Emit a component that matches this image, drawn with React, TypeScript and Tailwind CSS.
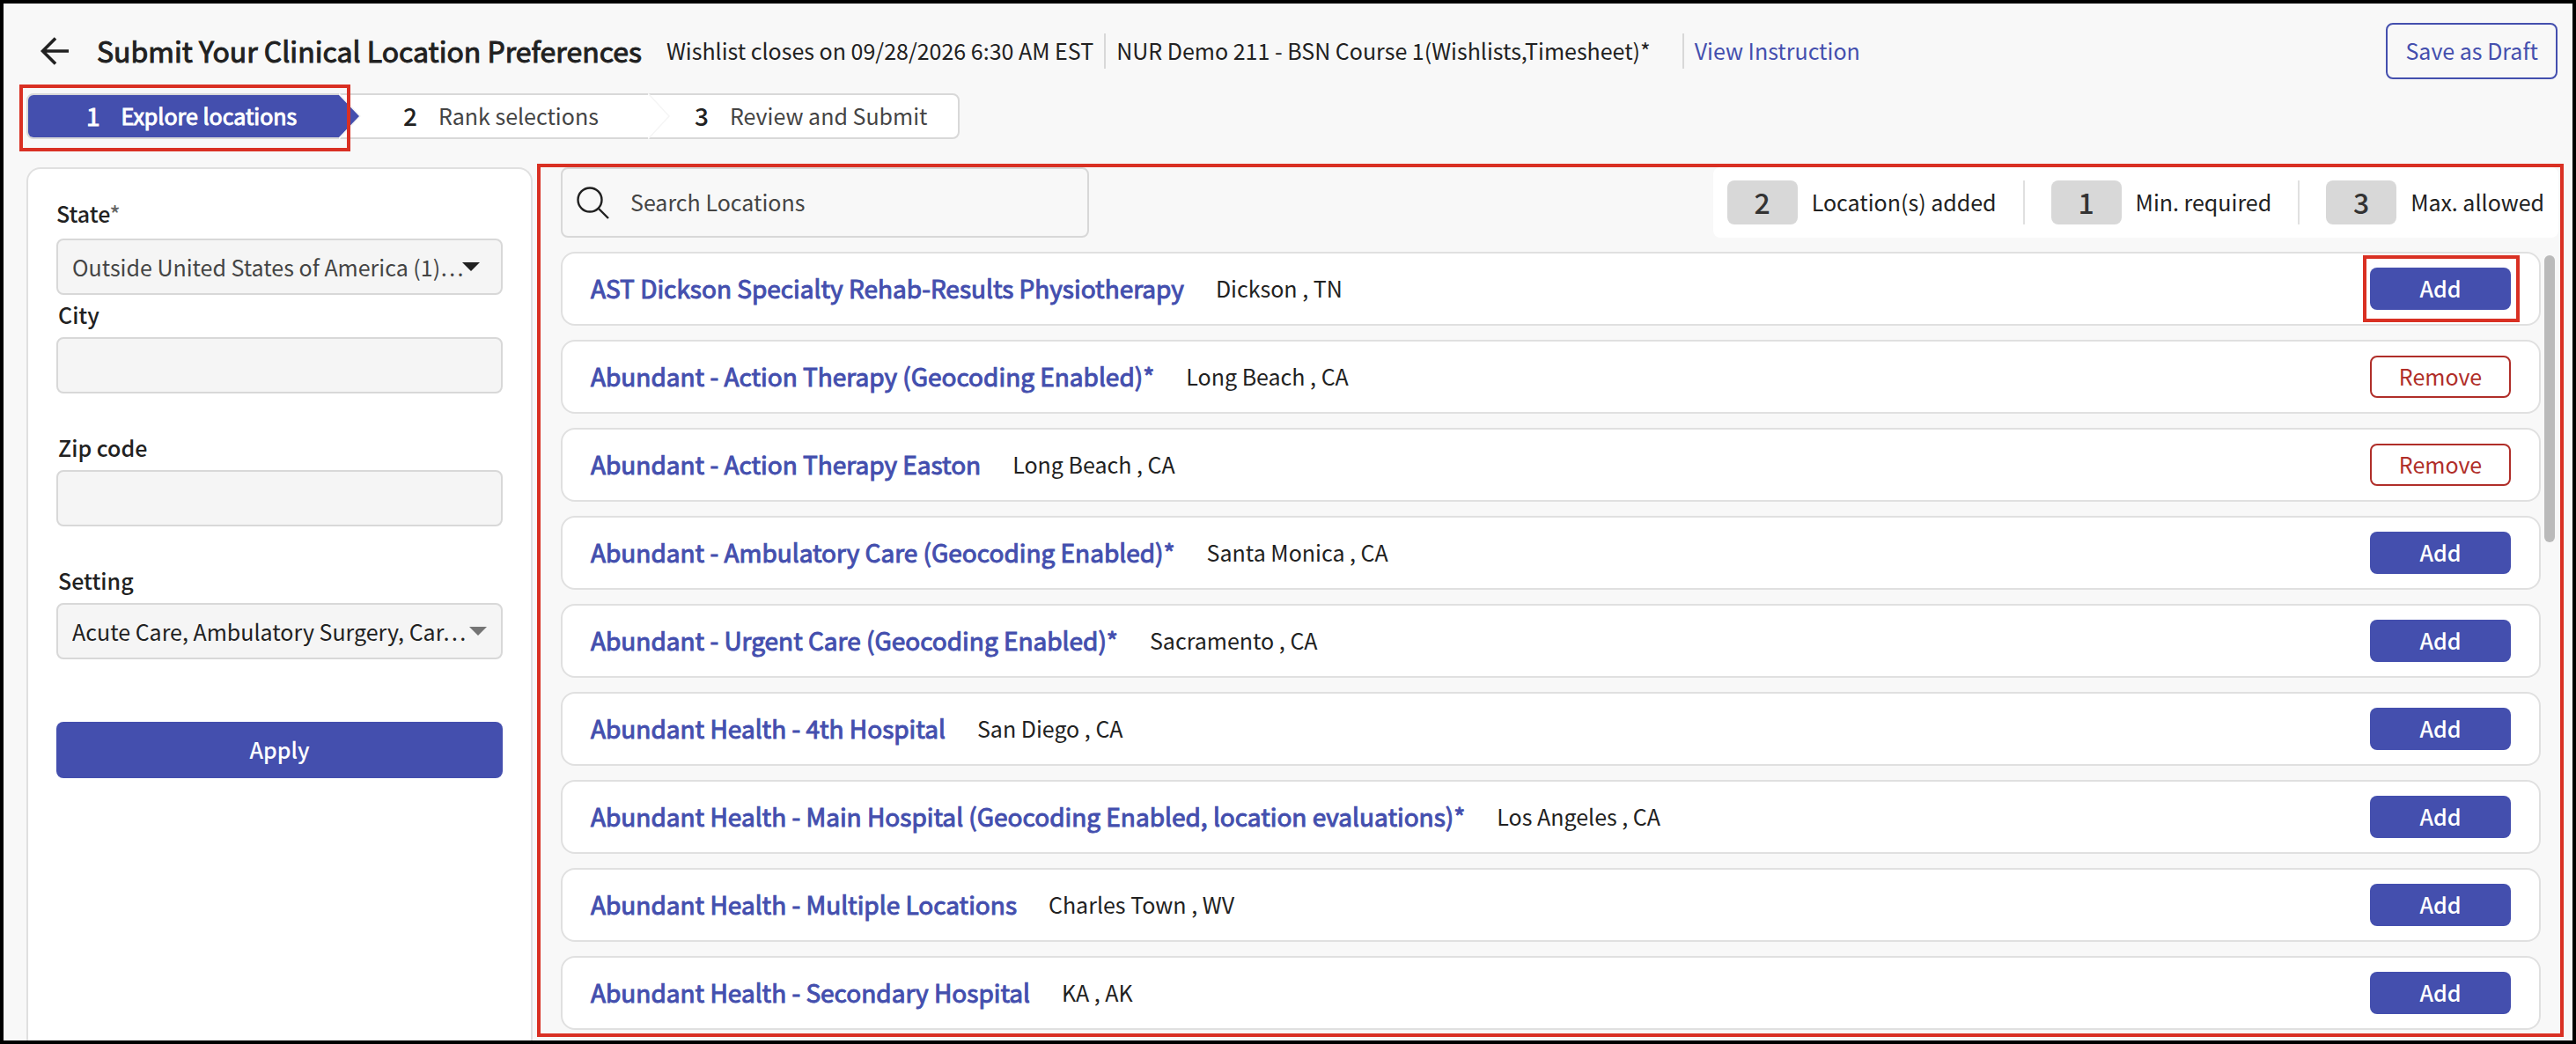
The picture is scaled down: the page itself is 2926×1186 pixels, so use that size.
import { useState } from "react";

const locations = [
    { name: "AST Dickson Specialty Rehab-Results Physiotherapy", place: "Dickson , TN", added: false },
    { name: "Abundant - Action Therapy (Geocoding Enabled)*", place: "Long Beach , CA", added: true },
    { name: "Abundant - Action Therapy Easton", place: "Long Beach , CA", added: true },
    { name: "Abundant - Ambulatory Care (Geocoding Enabled)*", place: "Santa Monica , CA", added: false },
    { name: "Abundant - Urgent Care (Geocoding Enabled)*", place: "Sacramento , CA", added: false },
    { name: "Abundant Health - 4th Hospital", place: "San Diego , CA", added: false },
    { name: "Abundant Health - Main Hospital (Geocoding Enabled, location evaluations)*", place: "Los Angeles , CA", added: false },
    { name: "Abundant Health - Multiple Locations", place: "Charles Town , WV", added: false },
    { name: "Abundant Health - Secondary Hospital", place: "KA , AK", added: false },
];

const fieldClass = "block h-16 w-full rounded-lg border-2 border-[#d8d8d8] bg-[#f5f5f5] pl-4 pr-5";
const labelClass = "block h-9 font-medium leading-9";

function Caret({ className }: { className: string }) {
    return (
        <svg viewBox="0 0 20 10" className={`pointer-events-none absolute top-1/2 h-[10px] w-5 -translate-y-1/2 ${className}`}>
            <path d="M0 0h20L10 10z" fill="currentColor" />
        </svg>
    );
}

function Stat({ value, label }: { value: number; label: string }) {
    return (
        <div className="flex items-center gap-4">
            <span className="flex h-[50px] w-20 items-center justify-center rounded-lg bg-[#d8d8d8] pb-[3px] text-[32px] font-medium leading-[50px] text-[#333]">
                {value}
            </span>
            <span className="pb-[3px]">{label}</span>
        </div>
    );
}

function StepDivider() {
    return (
        <svg viewBox="0 0 26 52" className="absolute -top-[2px] left-full z-10 h-[52px] w-[26px]">
            <path d="M0 0L24 26L0 52" fill="#fff" stroke="#f5f5f5" strokeWidth="1.5" />
        </svg>
    );
}

export default function App() {
    const [rows, setRows] = useState(locations);

    const toggleRow = (name: string) =>
        setRows(rows.map((r) => (r.name === name ? { ...r, added: !r.added } : r)));

    return (
        <div className="flex h-screen flex-col overflow-hidden border-4 border-black bg-[#f8f8f8] font-['Noto_Sans_CJK_SC',sans-serif] text-[25px] leading-9 text-[#212121]">
            <header className="flex items-center pl-[42px] pr-[17px] pt-[22px]">
                <button aria-label="Back">
                    <svg viewBox="0 0 32 32" className="h-8 w-8" fill="none" stroke="currentColor" strokeWidth="3.6">
                        <path d="M32 16H2M17 1.5L2.500 16L17 30.500" />
                    </svg>
                </button>
                <h1 className="ml-8 pb-[3px] text-[32px] leading-10 [-webkit-text-stroke:1px]">Submit Your Clinical Location Preferences</h1>
                <span className="ml-7 pb-[3px]">Wishlist closes on 09/28/2026 6:30 AM EST</span>
                <span className="ml-3 h-10 w-[2px] bg-[#d8d8d8]" />
                <span className="ml-3 pb-[3px]">NUR Demo 211 - BSN Course 1(Wishlists,Timesheet)*</span>
                <span className="ml-9 h-10 w-[2px] bg-[#d8d8d8]" />
                <a href="#" className="ml-3 pb-[3px] text-[#444fae]">View Instruction</a>
                <button className="ml-auto h-16 rounded-lg border-2 border-[#444fae] px-5 pb-[3px] text-[#444fae]">
                    Save as Draft
                </button>
            </header>

            <nav className="relative ml-[26px] mt-4 w-[1060px]">
                <ol className="flex h-[52px] rounded-lg border-2 border-[#d8d8d8] bg-white">
                    <li className="relative w-[353px]">
                        <button className="flex h-full w-full items-center gap-6 rounded-l-md bg-[#444fae] pb-[3px] pl-[66px] text-white [-webkit-text-stroke:1px]">
                            <span className="text-[28px]">1</span>
                            <span>Explore locations</span>
                        </button>
                        <StepDivider />
                        <svg viewBox="0 0 23 48" className="absolute left-full top-0 z-10 h-12 w-[23px]">
                            <path d="M0 0L23 24L0 48z" fill="#444fae" />
                        </svg>
                    </li>
                    <li className="relative w-[351px]">
                        <button className="flex h-full w-full items-center gap-6 pb-[3px] pl-[73px]">
                            <span className="text-[28px] font-medium">2</span>
                            <span className="text-[#444]">Rank selections</span>
                        </button>
                        <StepDivider />
                    </li>
                    <li className="flex-1">
                        <button className="flex h-full w-full items-center gap-6 pb-[3px] pl-[53px]">
                            <span className="text-[28px] font-medium">3</span>
                            <span className="text-[#444]">Review and Submit</span>
                        </button>
                    </li>
                </ol>
                <div className="pointer-events-none absolute -left-2 -top-[10px] z-20 h-[76px] w-[376px] border-4 border-[#d93023]" />
            </nav>

            <div className="mt-7 flex min-h-0 flex-1 gap-[5px] pl-[26px] pr-[10px]">
                <aside className="mt-1 w-[575px] shrink-0 rounded-t-2xl border-2 border-b-0 border-[#e0e0e0] bg-white px-8 pt-8">
                    <label htmlFor="state" className={`${labelClass} mb-[11px]`}>
                        State<span className="text-[#666]">*</span>
                    </label>
                    <div className="relative">
                        <select id="state" className={`${fieldClass} appearance-none text-[#444]`}>
                            <option>Outside United States of America (1)…</option>
                        </select>
                        <Caret className="right-[26px] text-[#212121]" />
                    </div>
                    <label htmlFor="city" className={`${labelClass} mb-2 mt-1 pl-[2px]`}>City</label>
                    <input id="city" type="text" className={fieldClass} />
                    <label htmlFor="zip" className={`${labelClass} mb-2 mt-[43px] pl-[2px]`}>Zip code</label>
                    <input id="zip" type="text" className={fieldClass} />
                    <label htmlFor="setting" className={`${labelClass} mb-2 mt-[43px] pl-[2px]`}>Setting</label>
                    <div className="relative">
                        <select id="setting" className={`${fieldClass} appearance-none`}>
                            <option>Acute Care, Ambulatory Surgery, Car…</option>
                        </select>
                        <Caret className="right-[18px] text-[#757575]" />
                    </div>
                    <button className="mt-[71px] h-16 w-full rounded-lg bg-[#444fae] pb-[3px] font-medium text-white">Apply</button>
                </aside>

                <section className="mb-1 flex min-w-0 flex-1 flex-col border-4 border-[#d93023] pl-[23px] pr-[2px]">
                    <div className="flex items-center justify-between">
                        <label className="flex h-20 w-[600px] items-center rounded-lg border-2 border-[#d8d8d8] pl-4">
                            <svg viewBox="0 0 37 37" className="h-[37px] w-[37px]" fill="none" stroke="currentColor" strokeWidth="2.4">
                                <circle cx="15" cy="15" r="13.500" />
                                <path d="M24.500 24.500L36 36" />
                            </svg>
                            <input
                                type="text"
                                aria-label="Search Locations"
                                placeholder="Search Locations"
                                className="ml-6 flex-1 pb-[3px] outline-none placeholder:text-[#444]"
                            />
                        </label>
                        <div className="flex h-20 items-center rounded-lg bg-white px-4">
                            <Stat value={2} label="Location(s) added" />
                            <span className="mx-[30px] h-[50px] w-[2px] bg-[#e0e0e0]" />
                            <Stat value={1} label="Min. required" />
                            <span className="mx-[30px] h-[50px] w-[2px] bg-[#e0e0e0]" />
                            <Stat value={3} label="Max. allowed" />
                        </div>
                    </div>

                    <div className="mt-4 flex min-h-0 flex-1 gap-1">
                        <ul className="flex min-w-0 flex-1 flex-col gap-4">
                            {rows.map((row, i) => (
                                <li
                                    key={row.name}
                                    className="flex h-[84px] shrink-0 items-center rounded-2xl border-2 border-[#e0e0e0] bg-white px-8"
                                >
                                    <a href="#" className="pb-[3px] text-[28px] text-[#444fae] [-webkit-text-stroke:1px]">{row.name}</a>
                                    <span className="ml-9 pb-[3px]">{row.place}</span>
                                    <div className="relative ml-auto">
                                        {row.added ? (
                                            <button
                                                onClick={() => toggleRow(row.name)}
                                                className="block h-12 w-40 rounded-lg border-2 border-[#b02e29] pb-[3px] text-[#b02e29]"
                                            >
                                                Remove
                                            </button>
                                        ) : (
                                            <button
                                                onClick={() => toggleRow(row.name)}
                                                className="block h-12 w-40 rounded-lg bg-[#444fae] pb-[3px] font-medium text-white"
                                            >
                                                Add
                                            </button>
                                        )}
                                        {i === 0 && (
                                            <div className="pointer-events-none absolute -bottom-[14px] -left-2 -right-[10px] -top-[14px] border-4 border-[#d93023]" />
                                        )}
                                    </div>
                                </li>
                            ))}
                        </ul>
                        <div className="mr-1 mt-1 h-[326px] w-3 rounded-full bg-[#bababa]" />
                    </div>
                </section>
            </div>
        </div>
    );
}
